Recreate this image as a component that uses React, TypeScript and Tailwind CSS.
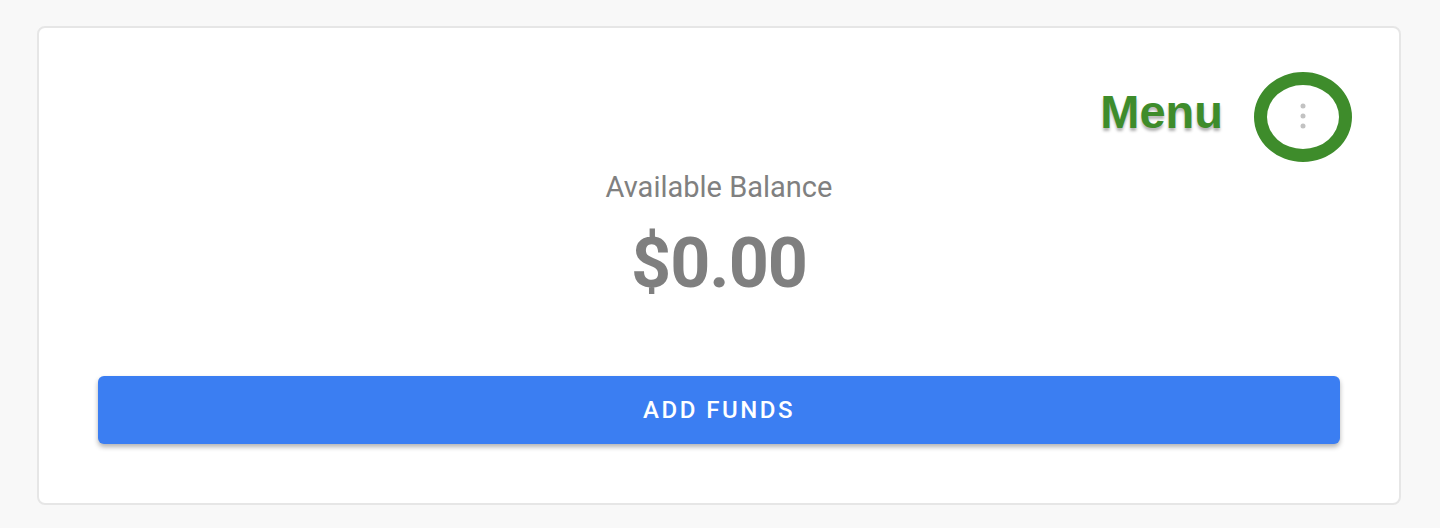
function KebabIcon() {
  return (
    <svg className="-mt-[2px] h-[30px] w-[10px]" viewBox="0 0 10 30" fill="#c2c2c2" aria-hidden="true">
      <circle cx="5" cy="5" r="2.5" />
      <circle cx="5" cy="15" r="2.5" />
      <circle cx="5" cy="25" r="2.5" />
    </svg>
  )
}

export default function App() {
  return (
    <div className="min-h-[528px] w-[1440px] bg-[#f8f8f8] pl-[37px] pt-[26px] font-['Roboto',sans-serif]">
      <section className="flex h-[479px] w-[1364px] flex-col rounded-[8px] border-2 border-[#e6e6e6] bg-white px-[59px]">
        <div className="flex justify-end pt-[65px] pr-[13px]">
          <div className="relative flex h-[48px] w-[48px] items-center justify-center">
            <KebabIcon />
            <div className="absolute left-1/2 top-1/2 h-[90px] w-[98px] -translate-x-1/2 -translate-y-1/2 rounded-[50%] border-[13px] border-[#3e8c2b]" />
            <span className="absolute right-[104px] top-[-5px] whitespace-nowrap font-['Liberation_Sans',Arial,sans-serif] text-[47px] font-bold leading-none text-[#3e8c2b] [text-shadow:0_3px_3px_rgba(0,0,0,0.3),-2px_0_0_#fff,2px_0_0_#fff,0_-2px_0_#fff,0_2px_0_#fff,-2px_-2px_0_#fff,2px_-2px_0_#fff,-2px_2px_0_#fff,2px_2px_0_#fff]">
              Menu
            </span>
          </div>
        </div>
        <div className="mt-[32px] flex flex-col items-center">
          <p className="text-[29px] leading-none text-[#808080]">Available Balance</p>
          <p className="mt-[26px] text-[70px] font-bold leading-none tracking-[-1px] text-[#7f7f7f]">$0.00</p>
        </div>
        <button
          className="mt-auto mb-[59px] flex h-[68px] w-full items-center justify-center rounded-[6px] bg-[#3b7ef2] text-[24px] font-medium tracking-[2.5px] text-white shadow-[0_3px_5px_rgba(0,0,0,0.3)]"
          type="button"
        >
          ADD FUNDS
        </button>
      </section>
    </div>
  )
}
